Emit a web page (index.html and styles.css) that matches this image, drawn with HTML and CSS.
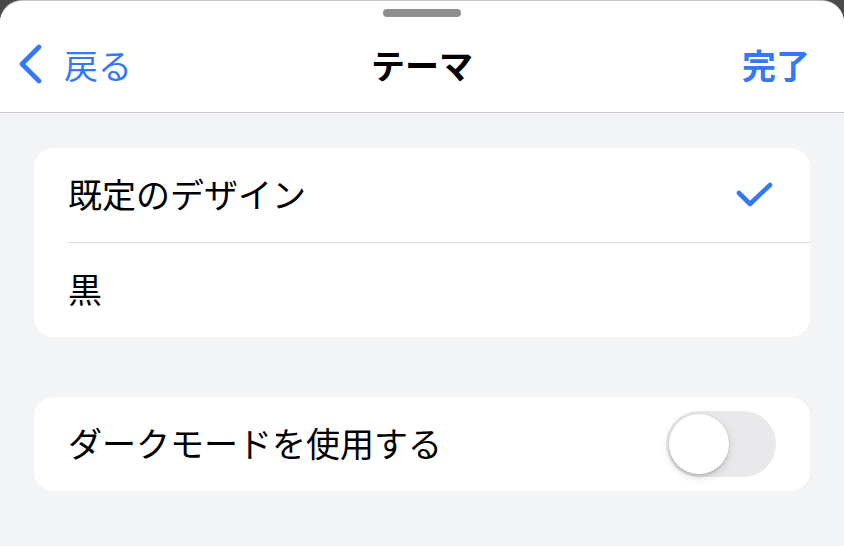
FILE: index.html
```html
<!DOCTYPE html>
<html lang="ja">
<head>
<meta charset="utf-8">
<link rel="stylesheet" href="styles.css">
</head>
<body>
<div class="sheet">
  <header class="nav">
    <div class="grabber"></div>
    <div class="navbar">
      <div class="back">
        <svg class="chev" width="26" height="40" viewBox="0 0 26 40"><path d="M21 3 L4 20 L21 37" fill="none" stroke="#3478f6" stroke-width="4.6" stroke-linecap="round" stroke-linejoin="round"/></svg>
        <span>戻る</span>
      </div>
      <div class="title">テーマ</div>
      <div class="done">完了</div>
    </div>
  </header>
  <main class="content">
    <section class="card">
      <div class="row sep">
        <span class="label">既定のデザイン</span>
        <svg class="check" width="38" height="28" viewBox="0 0 38 28"><path d="M3 12 L14 23 L34 4" fill="none" stroke="#3478f6" stroke-width="4.6" stroke-linecap="round" stroke-linejoin="round"/></svg>
      </div>
      <div class="row">
        <span class="label">黒</span>
      </div>
    </section>
    <section class="card">
      <div class="row">
        <span class="label">ダークモードを使用する</span>
        <div class="toggle"><div class="knob"></div></div>
      </div>
    </section>
  </main>
</div>
</body>
</html>
```
FILE: styles.css
```css
html, body {
  margin: 0;
  padding: 0;
  background: #4a4a4a;
  height: 546px;
  overflow: hidden;
}
body {
  font-family: "Noto Sans CJK JP", "Noto Sans", sans-serif;
  color: #000;
}
.sheet {
  height: 545px;
  margin-top: 1px;
  background: #f3f4f6;
  border-radius: 22px 22px 0 0;
  overflow: hidden;
  box-shadow: 0 -1px 0 #c4c4c4;
}
.nav {
  background: #fff;
  height: 111px;
  border-bottom: 1px solid #c9c9cc;
  display: flex;
  flex-direction: column;
  align-items: center;
}
.grabber {
  width: 78px;
  height: 8px;
  border-radius: 4px;
  background: #8e8e8e;
  margin-top: 8px;
}
.navbar {
  align-self: stretch;
  display: flex;
  align-items: center;
  justify-content: space-between;
  height: 82px;
  margin-top: 7px;
  padding: 0 34px 0 18px;
  position: relative;
  font-size: 34px;
  line-height: 40px;
}
.back {
  display: flex;
  align-items: center;
  gap: 20px;
  color: #3478f6;
}
.chev { display: block; margin-top: -2px; }
.title {
  position: absolute;
  left: 0;
  right: 0;
  text-align: center;
  font-weight: 700;
  pointer-events: none;
}
.done {
  color: #3478f6;
  font-weight: 700;
}
.content {
  padding: 35px 34px 0 34px;
  display: flex;
  flex-direction: column;
  gap: 60px;
}
.card {
  background: #fff;
  border-radius: 20px;
  padding-left: 34px;
  overflow: hidden;
}
.row {
  height: 94px;
  display: flex;
  align-items: center;
  justify-content: space-between;
  padding-right: 34px;
  font-size: 34px;
}
.row.sep {
  border-bottom: 1.5px solid #dcdcde;
}
.label { line-height: 40px; margin-top: -3px; }
.check { display: block; margin-right: 2px; }
.toggle {
  width: 110px;
  height: 66px;
  border-radius: 33px;
  background: #e9e9eb;
  display: flex;
  align-items: center;
  padding-left: 3px;
  box-sizing: border-box;
}
.knob {
  width: 60px;
  height: 60px;
  border-radius: 50%;
  background: #fff;
  box-shadow: 0 3px 8px rgba(0,0,0,0.15), 0 3px 1px rgba(0,0,0,0.06), 0 0 0 1px rgba(0,0,0,0.04);
}
```
